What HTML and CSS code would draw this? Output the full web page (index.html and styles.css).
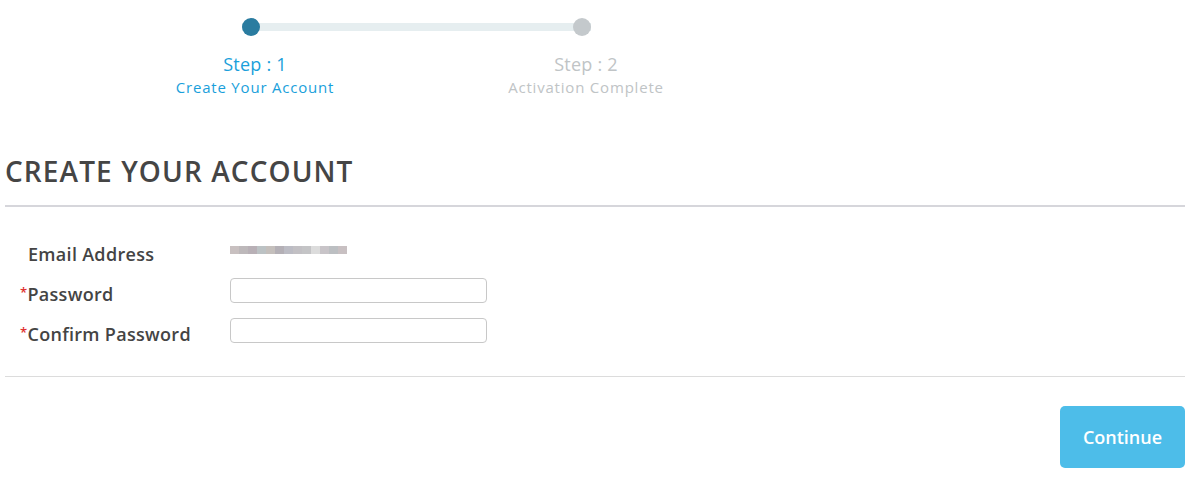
FILE: index.html
```html
<!DOCTYPE html>
<html lang="en">
<head>
    <meta charset="UTF-8">
    <meta name="viewport" content="width=device-width, initial-scale=1.0">
    <link rel="stylesheet" href="styles.css">
</head>
<body>
    <div class="page">
        <div class="steps">
            <div class="track">
                <span class="dot active"></span>
                <span class="dot"></span>
            </div>
            <div class="step-labels">
                <div class="step active">
                    <div class="step-num">Step : 1</div>
                    <div class="step-name">Create Your Account</div>
                </div>
                <div class="step">
                    <div class="step-num">Step : 2</div>
                    <div class="step-name">Activation Complete</div>
                </div>
            </div>
        </div>

        <h1 class="title">CREATE YOUR ACCOUNT</h1>

        <form class="form">
            <div class="row">
                <label class="label">Email Address</label>
                <div class="blurred">
                    <span style="background:#c8c0c0"></span>
                    <span style="background:#bdb8ba"></span>
                    <span style="background:#b8b0b6"></span>
                    <span style="background:#bcc2c4"></span>
                    <span style="background:#c4bfbc"></span>
                    <span style="background:#b4b0b6"></span>
                    <span style="background:#bcbcc4"></span>
                    <span style="background:#c2c0c4"></span>
                    <span style="background:#c4c4c6"></span>
                    <span style="background:#dcdcdc"></span>
                    <span style="background:#c8c4c8"></span>
                    <span style="background:#bcbfc2"></span>
                    <span style="background:#c8c0c2"></span>
                </div>
            </div>
            <div class="row">
                <label class="label"><i class="req">*</i>Password</label>
                <input class="field" type="password">
            </div>
            <div class="row">
                <label class="label"><i class="req">*</i>Confirm Password</label>
                <input class="field" type="password">
            </div>
        </form>

        <div class="actions">
            <button class="btn" type="button">Continue</button>
        </div>
    </div>
</body>
</html>
```

FILE: styles.css
```css
html, body {
    margin: 0;
    background: #fff;
}

body {
    font-family: "Open Sans", Arial, sans-serif;
    color: #444;
}

.page {
    padding: 0 4px 0 5px;
}

/* progress */
.steps {
    width: 500px;
    margin-left: 166px;
    padding-top: 18px;
}

.track {
    display: flex;
    justify-content: space-between;
    align-items: center;
    width: 349px;
    margin-left: 71px;
    height: 18px;
    background: linear-gradient(#e6eef0, #e6eef0) no-repeat center / 100% 8px;
}

.dot {
    width: 18px;
    height: 18px;
    border-radius: 50%;
    background: #c4c9cc;
}

.dot.active {
    background: #2a7ca0;
}

.step-labels {
    display: flex;
    justify-content: space-between;
    margin-top: 16px;
}

.step {
    width: 176px;
    margin-left: -4px;
    text-align: center;
    color: #c0c4c6;
}

.step + .step {
    margin-left: 0;
    margin-right: -3px;
}

.step.active {
    color: #1a9fdb;
}

.step-num {
    font-size: 18px;
    line-height: 24px;
    letter-spacing: 0.2px;
}

.step-name {
    font-size: 15px;
    line-height: 22px;
    letter-spacing: 0.8px;
}

/* heading */
.title {
    margin: 56px 0 0;
    padding-bottom: 17px;
    font-size: 28px;
    font-weight: 600;
    line-height: 34px;
    letter-spacing: 1.1px;
    border-bottom: 2px solid #d6d6db;
    color: #454545;
}

/* form */
.form {
    display: flex;
    flex-direction: column;
    gap: 15px;
    padding: 31px 0 33px;
    border-bottom: 1px solid #dcdcdc;
}

.row {
    display: flex;
    align-items: center;
    height: 25px;
}

.label {
    width: 225px;
    padding: 6px 0 0 15px;
    box-sizing: border-box;
    font-size: 18px;
    font-weight: 600;
    letter-spacing: 0.3px;
    color: #444;
}

.req {
    font-style: normal;
    color: #e03030;
    font-size: 13px;
    vertical-align: 4px;
}

.row:first-child .label {
    padding-left: 23px;
}

.blurred {
    display: flex;
    height: 8px;
    margin-top: -2px;
}

.blurred span {
    width: 9px;
    height: 8px;
}

.field {
    width: 257px;
    height: 25px;
    box-sizing: border-box;
    border: 1px solid #c8c8c8;
    border-radius: 4px;
    padding: 2px 6px;
    font-size: 14px;
}

/* footer */
.actions {
    display: flex;
    justify-content: flex-end;
    padding-top: 29px;
}

.btn {
    width: 125px;
    height: 62px;
    border: 0;
    border-radius: 5px;
    background: #4dbde9;
    color: #fff;
    font-family: inherit;
    font-size: 18px;
    font-weight: 600;
    cursor: pointer;
}
```
